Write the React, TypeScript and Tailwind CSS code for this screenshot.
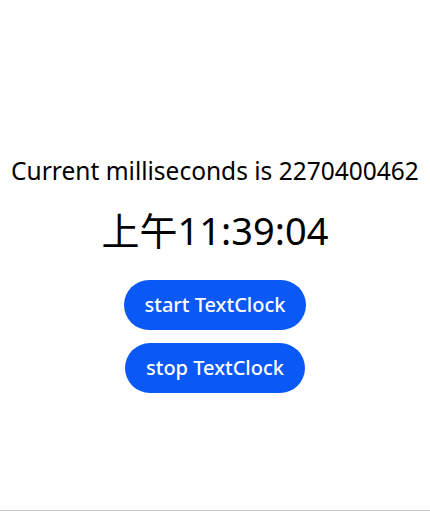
import { useState } from "react";

export default function App() {
  const [running, setRunning] = useState(true);

  return (
    <div
      className="h-[511px] w-full bg-white flex flex-col items-center border-b border-[#c8c8c8]"
      style={{ fontFamily: '"Noto Sans", "Noto Sans CJK SC", sans-serif' }}
    >
      {/* Milliseconds label */}
      <p className="mt-[156px] text-[24.5px] leading-[30px] text-black whitespace-nowrap">
        Current milliseconds is 2270400462
      </p>

      {/* Clock */}
      <p className="mt-[19px] text-[38px] leading-[50px] text-black whitespace-nowrap">
        上午11:39:04
      </p>

      {/* Controls */}
      <div className="mt-[25px] flex flex-col items-center gap-[13px]">
        <button
          onClick={() => setRunning(true)}
          className="h-[50px] w-[182px] rounded-full bg-[#0a59f7] text-white text-[20px] font-medium"
        >
          start TextClock
        </button>
        <button
          onClick={() => setRunning(false)}
          className="h-[50px] w-[180px] rounded-full bg-[#0a59f7] text-white text-[20px] font-medium"
          data-running={running}
        >
          stop TextClock
        </button>
      </div>
    </div>
  );
}
